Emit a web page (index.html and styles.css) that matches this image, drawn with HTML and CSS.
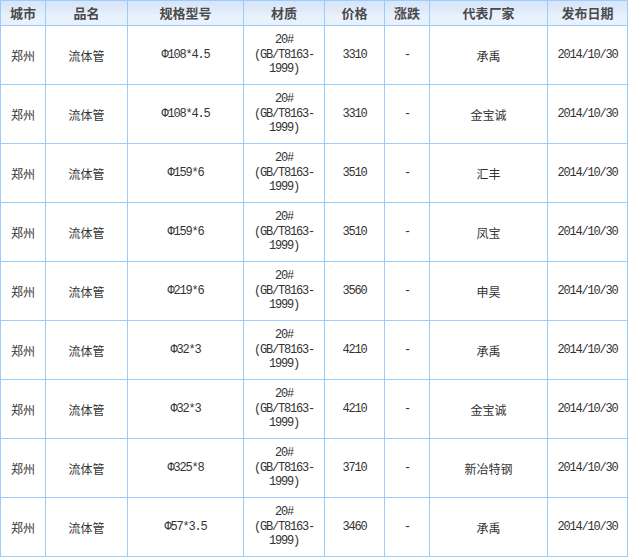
FILE: index.html
```html
<!DOCTYPE html>
<html lang="zh">
<head>
<meta charset="utf-8">
<title>流体管价格</title>
<link rel="stylesheet" href="styles.css">
</head>
<body>
<table class="price-table">
  <colgroup>
    <col class="c1"><col class="c2"><col class="c3"><col class="c4"><col class="c5"><col class="c6"><col class="c7"><col class="c8">
  </colgroup>
  <thead>
    <tr><th>城市</th><th>品名</th><th>规格型号</th><th>材质</th><th>价格</th><th>涨跌</th><th>代表厂家</th><th>发布日期</th></tr>
  </thead>
  <tbody>
    <tr><td>郑州</td><td>流体管</td><td class="num">Φ108*4.5</td><td class="num mat">20#<br>(GB/T8163-<br>1999)</td><td class="num">3310</td><td class="num">-</td><td>承禹</td><td class="num">2014/10/30</td></tr>
    <tr><td>郑州</td><td>流体管</td><td class="num">Φ108*4.5</td><td class="num mat">20#<br>(GB/T8163-<br>1999)</td><td class="num">3310</td><td class="num">-</td><td>金宝诚</td><td class="num">2014/10/30</td></tr>
    <tr><td>郑州</td><td>流体管</td><td class="num">Φ159*6</td><td class="num mat">20#<br>(GB/T8163-<br>1999)</td><td class="num">3510</td><td class="num">-</td><td>汇丰</td><td class="num">2014/10/30</td></tr>
    <tr><td>郑州</td><td>流体管</td><td class="num">Φ159*6</td><td class="num mat">20#<br>(GB/T8163-<br>1999)</td><td class="num">3510</td><td class="num">-</td><td>凤宝</td><td class="num">2014/10/30</td></tr>
    <tr><td>郑州</td><td>流体管</td><td class="num">Φ219*6</td><td class="num mat">20#<br>(GB/T8163-<br>1999)</td><td class="num">3560</td><td class="num">-</td><td>申昊</td><td class="num">2014/10/30</td></tr>
    <tr><td>郑州</td><td>流体管</td><td class="num">Φ32*3</td><td class="num mat">20#<br>(GB/T8163-<br>1999)</td><td class="num">4210</td><td class="num">-</td><td>承禹</td><td class="num">2014/10/30</td></tr>
    <tr><td>郑州</td><td>流体管</td><td class="num">Φ32*3</td><td class="num mat">20#<br>(GB/T8163-<br>1999)</td><td class="num">4210</td><td class="num">-</td><td>金宝诚</td><td class="num">2014/10/30</td></tr>
    <tr><td>郑州</td><td>流体管</td><td class="num">Φ325*8</td><td class="num mat">20#<br>(GB/T8163-<br>1999)</td><td class="num">3710</td><td class="num">-</td><td>新冶特钢</td><td class="num">2014/10/30</td></tr>
    <tr><td>郑州</td><td>流体管</td><td class="num">Φ57*3.5</td><td class="num mat">20#<br>(GB/T8163-<br>1999)</td><td class="num">3460</td><td class="num">-</td><td>承禹</td><td class="num">2014/10/30</td></tr>
  </tbody>
</table>
</body>
</html>
```

FILE: styles.css
```css
html, body {
  margin: 0;
  padding: 0;
  background: #ffffff;
}

.price-table {
  table-layout: fixed;
  border-collapse: separate;
  border-spacing: 1px;
  background: #99ccff;
  width: 628px;
  font-family: "Noto Sans CJK SC", "Liberation Sans", sans-serif;
  font-size: 12px;
  color: #333333;
}

.c1 { width: 44px; }
.c2 { width: 81px; }
.c3 { width: 115px; }
.c4 { width: 80px; }
.c5 { width: 59px; }
.c6 { width: 44px; }
.c7 { width: 117px; }
.c8 { width: 79px; }

.price-table th,
.price-table td {
  padding: 0;
  text-align: center;
  vertical-align: middle;
  overflow: hidden;
  white-space: nowrap;
}

.price-table th {
  height: 24px;
  background: linear-gradient(#d8e5f8 0%, #dfeafa 40%, #e9f1fd 60%, #e9f1fd 100%);
  font-size: 13px;
  font-weight: bold;
  color: #4a4a4a;
  line-height: 24px;
}

.price-table td {
  height: 58px;
  background: #ffffff;
  line-height: 15px;
}

.price-table td.num {
  font-family: "Liberation Mono", "DejaVu Sans Mono", "Noto Sans CJK SC", monospace;
  letter-spacing: -1.2px;
  color: #333333;
}

.price-table td.mat {
  line-height: 14.5px;
}
```
